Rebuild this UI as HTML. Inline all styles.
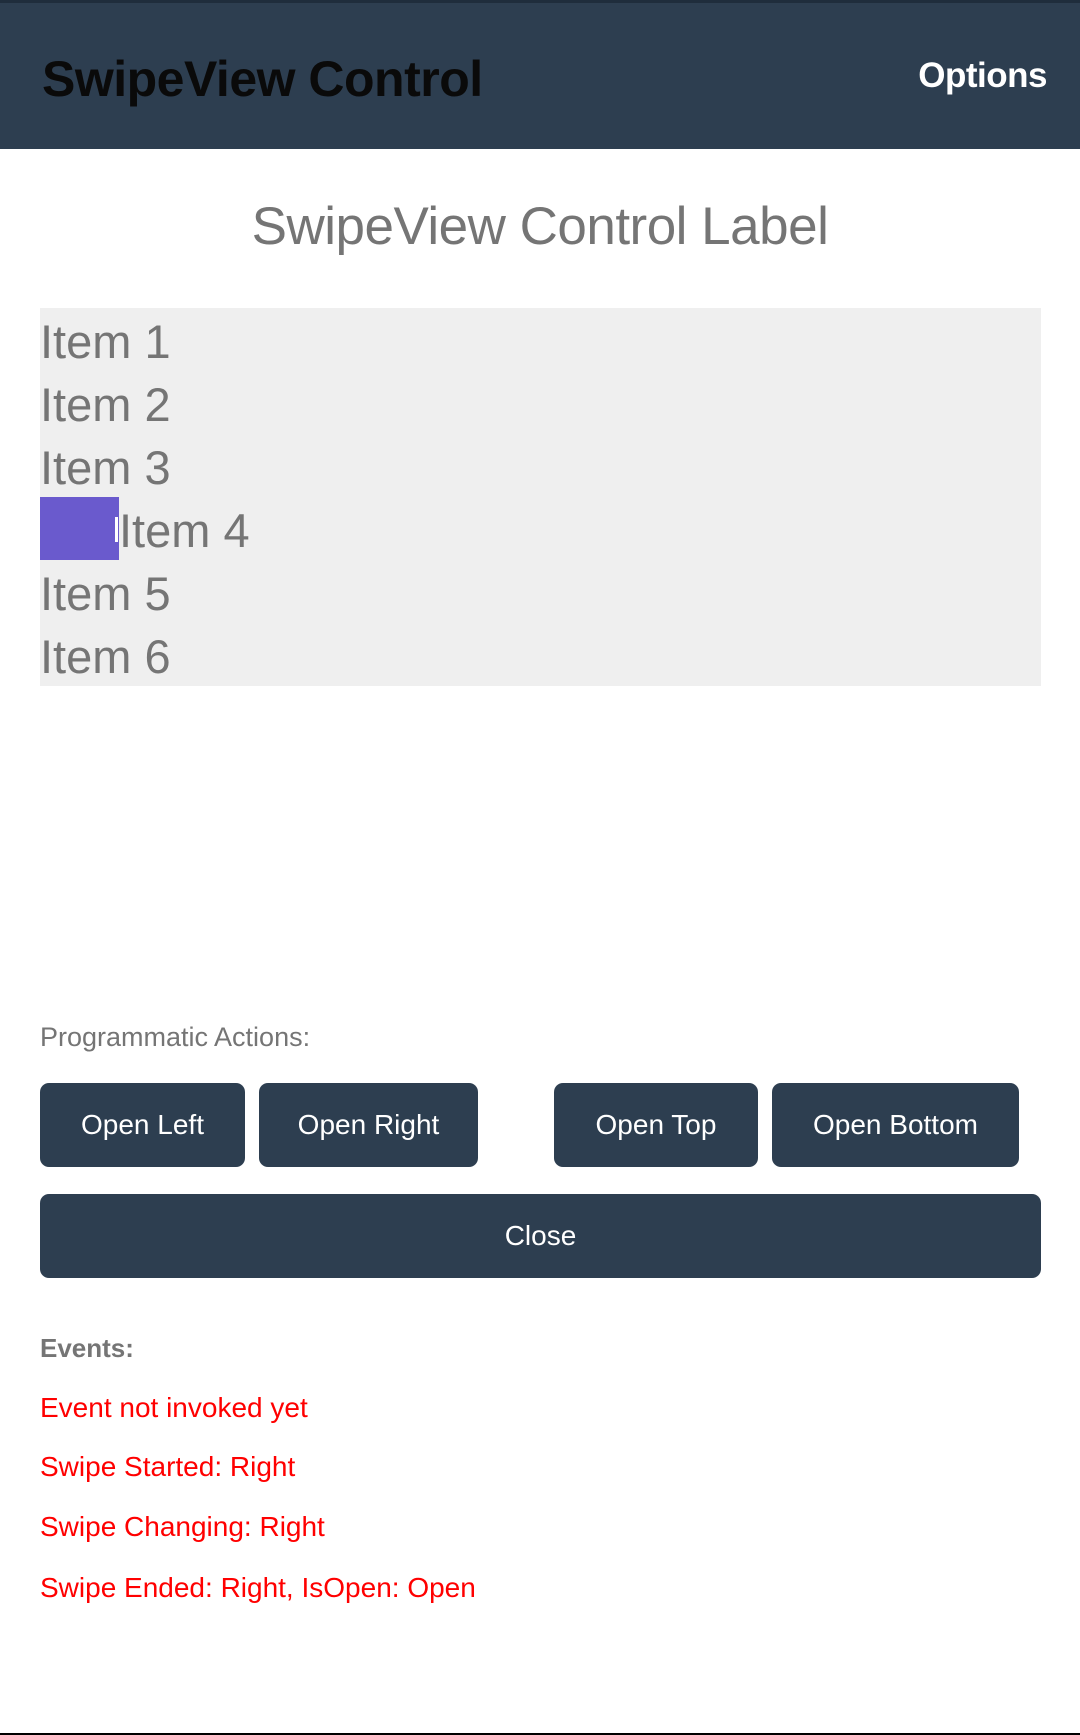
<!DOCTYPE html>
<html><head><meta charset="utf-8">
<style>
*{margin:0;padding:0;box-sizing:border-box}
body{width:1080px;height:1735px;background:#fff;font-family:"Liberation Sans",sans-serif;position:relative;overflow:hidden}
.hdr{position:absolute;left:0;top:0;width:1080px;height:149px;background:#2d3e50;border-top:3px solid #1f2d3c}
.t{position:absolute;white-space:nowrap}
.btn{position:absolute;background:#2d3e50;border-radius:9px;color:#fff;font-size:28px;display:flex;align-items:center;justify-content:center}
.ev{color:#ff0000;font-size:28px;left:40px}
.item{position:absolute;left:40px;font-size:47px;color:#757575;line-height:63px}
</style></head><body>
<div class="hdr"></div>
<div class="t" style="left:42px;top:50px;font-size:50px;color:#0a0a0a;font-weight:bold;letter-spacing:-0.5px">SwipeView Control</div>
<div class="t" style="right:33px;top:56px;font-size:35px;color:#fff;font-weight:bold;letter-spacing:-0.5px">Options</div>
<div class="t" style="left:0;width:1080px;text-align:center;top:196px;font-size:53px;color:#757575;letter-spacing:-0.5px">SwipeView Control Label</div>
<div style="position:absolute;left:40px;top:308px;width:1001px;height:378px;background:#efefef"></div>
<div class="item" style="top:310px">Item 1</div>
<div class="item" style="top:373px">Item 2</div>
<div class="item" style="top:436px">Item 3</div>
<div style="position:absolute;left:40px;top:497px;width:79px;height:63px;background:#6a5acd"></div>
<div style="position:absolute;left:115px;top:517px;width:3px;height:25px;background:#fff"></div>
<div class="item" style="top:499px;left:119px">Item 4</div>
<div class="item" style="top:562px">Item 5</div>
<div class="item" style="top:625px">Item 6</div>
<div class="t" style="left:40px;top:1022px;font-size:27px;color:#757575">Programmatic Actions:</div>
<div class="btn" style="left:40px;top:1083px;width:205px;height:84px">Open Left</div>
<div class="btn" style="left:259px;top:1083px;width:219px;height:84px">Open Right</div>
<div class="btn" style="left:554px;top:1083px;width:204px;height:84px">Open Top</div>
<div class="btn" style="left:772px;top:1083px;width:247px;height:84px">Open Bottom</div>
<div class="btn" style="left:40px;top:1194px;width:1001px;height:84px">Close</div>
<div class="t" style="left:40px;top:1333px;font-size:26px;color:#757575;font-weight:bold">Events:</div>
<div class="t ev" style="top:1392px">Event not invoked yet</div>
<div class="t ev" style="top:1451px">Swipe Started: Right</div>
<div class="t ev" style="top:1511px">Swipe Changing: Right</div>
<div class="t ev" style="top:1572px">Swipe Ended: Right, IsOpen: Open</div>
<div style="position:absolute;left:0;top:1733px;width:1080px;height:2px;background:#000"></div>
</body></html>
